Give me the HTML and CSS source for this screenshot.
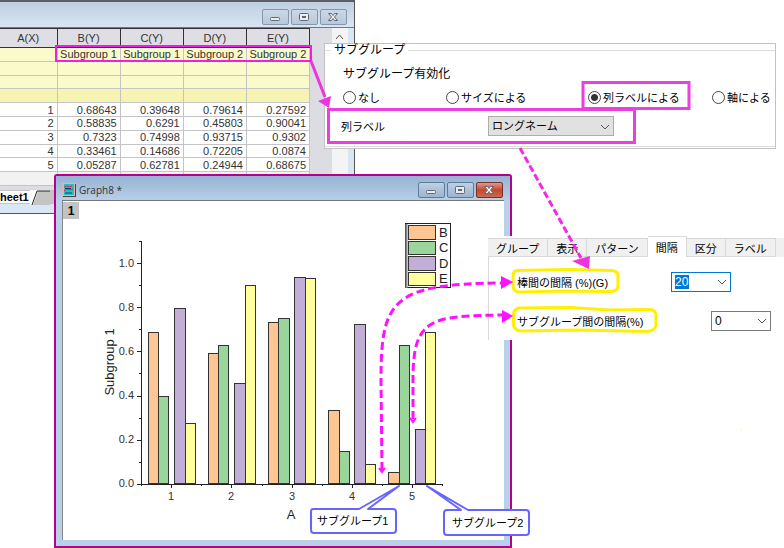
FILE: index.html
```html
<!DOCTYPE html>
<html lang="ja">
<head>
    <meta charset="UTF-8">
    <meta name="viewport" content="width=device-width, initial-scale=1.0">
    <title>サブグループ</title>
    <link rel="stylesheet" href="styles.css">
</head>
<body>
    <main class="canvas">
        <!-- Worksheet -->
        <section class="window sheet">
            <div class="titlebar">
                <div class="win-buttons">
                    <button type="button" aria-label="Minimize"><svg width="26" height="15"><rect x="8.500" y="7.500" width="9" height="3" rx="1"/></svg></button>
                    <button type="button" aria-label="Maximize"><svg width="26" height="15"><rect x="8.500" y="3.500" width="9" height="7" rx="1"/><rect x="11.500" y="6.500" width="3" height="1"/></svg></button>
                    <button type="button" aria-label="Close"><svg width="26" height="15"><path d="M8.500 3.500h3l1.500 2 1.500-2h3l-3 3.500 3 3.500h-3l-1.500-2-1.500 2h-3l3-3.500z"/></svg></button>
                </div>
            </div>
            <div class="sheet-body">
                <table class="grid">
                    <thead>
                        <tr><th>A(X)</th><th>B(Y)</th><th>C(Y)</th><th>D(Y)</th><th>E(Y)</th></tr>
                    </thead>
                    <tbody>
                        <tr class="label"><td></td><td>Subgroup 1</td><td>Subgroup 1</td><td>Subgroup 2</td><td>Subgroup 2</td></tr>
                        <tr class="label"><td></td><td></td><td></td><td></td><td></td></tr>
                        <tr class="label"><td></td><td></td><td></td><td></td><td></td></tr>
                        <tr class="label dark"><td></td><td></td><td></td><td></td><td></td></tr>
                        <tr><td>1</td><td>0.68643</td><td>0.39648</td><td>0.79614</td><td>0.27592</td></tr>
                        <tr><td>2</td><td>0.58835</td><td>0.6291</td><td>0.45803</td><td>0.90041</td></tr>
                        <tr><td>3</td><td>0.7323</td><td>0.74998</td><td>0.93715</td><td>0.9302</td></tr>
                        <tr><td>4</td><td>0.33461</td><td>0.14686</td><td>0.72205</td><td>0.0874</td></tr>
                        <tr><td>5</td><td>0.05287</td><td>0.62781</td><td>0.24944</td><td>0.68675</td></tr>
                        <tr class="rest"><td></td><td></td><td></td><td></td><td></td></tr>
                    </tbody>
                </table>
                <div class="scrollbar"><svg width="16" height="18"><path d="M4 11l3.500-4 3.500 4"/></svg></div>
            </div>
            <div class="sheet-tabs">
                <span>heet1</span>
                <svg width="20" height="15"><path class="tab-rest" d="M3 15L8 1H20V15z"/><path d="M2 15L7 1H20"/></svg>
            </div>
        </section>

        <!-- Graph -->
        <section class="window graph">
            <div class="titlebar">
                <svg class="graph-icon" width="14" height="14">
                    <rect x="1" y="1" width="13" height="13" fill="#5c3b3b"/>
                    <rect x="0" y="0" width="13" height="13" fill="#d8b8b0"/>
                    <rect x="2" y="1" width="10" height="11" fill="#25bfc4"/>
                    <path d="M2 4l3-1 2 1 3-1M2 8l3-2 3 1 3-1" stroke="#d8304a" fill="none"/>
                    <path d="M3 10h7M3 5.500h6" stroke="#173d7a" fill="none"/>
                </svg>
                <span>Graph8 *</span>
                <div class="win-buttons">
                    <button type="button" aria-label="Minimize"><svg width="26" height="15"><rect x="8.500" y="7.500" width="9" height="3" rx="1"/></svg></button>
                    <button type="button" aria-label="Maximize"><svg width="26" height="15"><rect x="8.500" y="3.500" width="9" height="7" rx="1"/><rect x="11.500" y="6.500" width="3" height="1"/></svg></button>
                    <button type="button" class="close" aria-label="Close"><svg width="26" height="15"><path d="M8.500 3.500h3l1.500 2 1.500-2h3l-3 3.500 3 3.500h-3l-1.500-2-1.500 2h-3l3-3.500z"/></svg></button>
                </div>
            </div>
            <div class="graph-body">
                <svg class="chart" viewBox="63 201 441 339">
                    <rect x="63" y="202" width="16" height="17" fill="#c3c3c3"/>
                    <text class="layer" x="71" y="215">1</text>

                    <g class="b">
                        <rect x="148.500" y="332.500" width="10" height="151"/>
                        <rect x="208.500" y="353.500" width="10" height="130"/>
                        <rect x="268.500" y="322.500" width="10" height="161"/>
                        <rect x="328.500" y="410.500" width="11" height="73"/>
                        <rect x="388.500" y="472.500" width="11" height="11"/>
                    </g>
                    <g class="c">
                        <rect x="158.500" y="396.500" width="10" height="87"/>
                        <rect x="218.500" y="345.500" width="10" height="138"/>
                        <rect x="278.500" y="318.500" width="11" height="165"/>
                        <rect x="339.500" y="451.500" width="10" height="32"/>
                        <rect x="399.500" y="345.500" width="10" height="138"/>
                    </g>
                    <g class="d">
                        <rect x="174.500" y="308.500" width="11" height="175"/>
                        <rect x="234.500" y="383.500" width="11" height="100"/>
                        <rect x="294.500" y="277.500" width="11" height="206"/>
                        <rect x="354.500" y="324.500" width="11" height="159"/>
                        <rect x="415.500" y="429.500" width="10" height="54"/>
                    </g>
                    <g class="e">
                        <rect x="185.500" y="423.500" width="10" height="60"/>
                        <rect x="245.500" y="285.500" width="10" height="198"/>
                        <rect x="305.500" y="278.500" width="10" height="205"/>
                        <rect x="365.500" y="464.500" width="10" height="19"/>
                        <rect x="425.500" y="332.500" width="10" height="151"/>
                    </g>

                    <path class="axis" d="M141.500 241V484M137 484.500H443
                        M137 440.500h5M137 396.500h5M137 351.500h5M137 307.500h5M137 263.500h5
                        M139 241.500h3M139 285.500h3M139 329.500h3M139 373.500h3M139 418.500h3M139 462.500h3
                        M171.500 484v4M231.500 484v4M292.500 484v4M352.500 484v4M412.500 484v4
                        M141.500 484v2M201.500 484v2M262.500 484v2M322.500 484v2M382.500 484v2M442.500 484v2"/>
                    <g class="tick y">
                        <text x="134" y="267">1.0</text>
                        <text x="134" y="311">0.8</text>
                        <text x="134" y="355">0.6</text>
                        <text x="134" y="399">0.4</text>
                        <text x="134" y="443">0.2</text>
                        <text x="134" y="487">0.0</text>
                    </g>
                    <g class="tick x">
                        <text x="171" y="500">1</text>
                        <text x="231" y="500">2</text>
                        <text x="292" y="500">3</text>
                        <text x="352" y="500">4</text>
                        <text x="412" y="500">5</text>
                    </g>
                    <text class="title" x="291" y="519">A</text>
                    <text class="title" transform="translate(114 362) rotate(-90)">Subgroup 1</text>

                    <rect class="legend" x="405.500" y="223.500" width="45" height="64"/>
                    <path class="legend-edge" d="M406.500 288V224"/>
                    <g class="b"><rect x="408.500" y="225.500" width="27" height="14"/></g>
                    <g class="c"><rect x="408.500" y="241.500" width="27" height="13"/></g>
                    <g class="d"><rect x="408.500" y="256.500" width="27" height="14"/></g>
                    <g class="e"><rect x="408.500" y="272.500" width="27" height="13"/></g>
                    <g class="legend-text">
                        <text x="439" y="237">B</text>
                        <text x="439" y="252">C</text>
                        <text x="439" y="268">D</text>
                        <text x="439" y="283">E</text>
                    </g>
                </svg>
            </div>
        </section>

        <!-- Subgroup settings -->
        <section class="panel">
            <fieldset>
                <legend>サブグループ</legend>
                <p class="caption">サブグループ有効化</p>
                <div class="radios">
                    <label><input type="radio" name="subgroup">なし</label>
                    <label><input type="radio" name="subgroup">サイズによる</label>
                    <label><input type="radio" name="subgroup" checked>列ラベルによる</label>
                    <label><input type="radio" name="subgroup">軸による</label>
                </div>
                <div class="label-row">
                    <label for="columnLabel">列ラベル</label>
                    <div class="select-box">
                        <select id="columnLabel"><option>ロングネーム</option></select>
                        <svg class="chevron" width="10" height="6"><path d="M1 1l4 4 4-4"/></svg>
                    </div>
                </div>
            </fieldset>
        </section>

        <!-- Spacing tab -->
        <section class="spacing">
            <div class="tabs" role="tablist">
                <button type="button" role="tab">グループ</button>
                <button type="button" role="tab">表示</button>
                <button type="button" role="tab">パターン</button>
                <button type="button" role="tab" class="active" aria-selected="true">間隔</button>
                <button type="button" role="tab">区分</button>
                <button type="button" role="tab">ラベル</button>
            </div>
            <div class="fields">
                <div class="field">
                    <label for="barGap">棒間の間隔 (%)(G)</label>
                    <div class="combo focused">
                        <input type="text" id="barGap" value="20">
                        <svg class="chevron" width="10" height="6"><path d="M1 1l4 4 4-4"/></svg>
                    </div>
                </div>
                <div class="field wide">
                    <label for="subgroupGap">サブグループ間の間隔(%)</label>
                    <div class="combo">
                        <input type="text" id="subgroupGap" value="0">
                        <svg class="chevron" width="10" height="6"><path d="M1 1l4 4 4-4"/></svg>
                    </div>
                </div>
            </div>
        </section>

        <!-- Highlights, arrows and callouts -->
        <svg class="notes" width="784" height="548">
            <g class="frame">
                <rect class="thin" x="56" y="46" width="255" height="15"/>
                <rect x="583" y="82.500" width="106" height="26"/>
                <rect x="328.500" y="109.500" width="306" height="33"/>
            </g>
            <g class="marker">
                <path d="M517 270.500L570 269.500L612 270.500Q618 271 618 276V286Q618 291 611 291.500L560 291L520 292Q513 292 513 285V276Q513 271 517 270.500z"/>
                <path d="M519 308L570 307.500L610 310L650 309.500Q656 310 656 316V325Q655 331 647 331.500L580 330L521 331Q514 330 513.500 325V314Q514 309 519 308z"/>
            </g>

            <path class="arrow" d="M311 61L325 97"/>
            <path class="head soft" d="M318 101L331 96L329 108z"/>
            <path class="arrow dash" d="M520 148L581 258"/>
            <path class="head soft" d="M572 261L590 256L589 269z"/>
            <path class="curve" d="M382 470L381 380C381 300 392 284 501 283"/>
            <path class="head" d="M501 276L513 282L501 289z"/>
            <path class="curve" d="M413 419V375C414 318 432 316 502 315"/>
            <path class="head" d="M502 310L513 316L502 323z"/>
            <path class="tip" d="M379 468l3 4 3-4M410 418l3 4 3-4"/>

            <g class="callout">
                <path d="M313 509H359L399 486L368 509H393Q396 509 396 512V530Q396 533 393 533H314Q311 533 311 530V512Q311 509 313 509z"/>
                <path d="M447 510H461L427 486L468 510H526Q529 510 529 513V532Q529 535 526 535H447Q444 535 444 532V513Q444 510 447 510z"/>
                <text x="317" y="525">サブグループ1</text>
                <text x="452" y="527">サブグループ2</text>
            </g>
            <circle cx="741" cy="430" r="1" fill="#fffbb0"/>
        </svg>
    </main>
</body>
</html>
```

FILE: styles.css
```css
* {
    box-sizing: border-box;
}
body {
    margin: 0;
    background-color: #fff;
    color: #000;
    font-family: "Liberation Sans", "Noto Sans CJK JP", sans-serif;
    font-size: 11px;
}
button, input, select {
    font: inherit;
    color: inherit;
    margin: 0;
    padding: 0;
}
.canvas {
    position: relative;
    min-height: 100vh;
    overflow: hidden;
}

/* windows */
.window {
    position: absolute;
}
.titlebar {
    display: flex;
    align-items: center;
}
.win-buttons {
    display: flex;
    gap: 2px;
    margin-left: auto;
}
.win-buttons button {
    width: 27px;
    height: 16px;
    border: 1px solid #8796ab;
    border-radius: 2px;
    background: linear-gradient(#cbd8e7, #b8c8da);
    line-height: 0;
    overflow: hidden;
}
.win-buttons svg {
    margin-left: -1px;
    fill: #e8edf3;
    stroke: #5f6875;
}
.win-buttons .close {
    border-color: #7d2f2b;
    background: linear-gradient(#dc9a8c, #c4472f 50%, #cb6a50);
}
.win-buttons .close svg {
    fill: #fff;
}

.sheet {
    top: 0;
    left: 0;
    width: 355px;
    padding-bottom: 9px;
    border-top: 2px solid #5d5d63;
    border-right: 1px solid #555;
    border-bottom: 1px solid #555;
    background-color: #d9e6f4;
}
.sheet .titlebar {
    height: 26px;
    padding: 4px 7px 0 0;
    background: linear-gradient(#bfcfdf, #d9e5f2);
    border-bottom: 1px solid #777;
}
.sheet-body {
    display: flex;
    align-items: flex-start;
    height: 162px;
    margin-right: 6px;
    background-color: #dcdce3;
}
.grid {
    width: 310px;
    height: 158px;
    table-layout: fixed;
    border-collapse: collapse;
    background-color: #fff;
    color: #333;
    line-height: 12px;
}
.grid th, .grid td {
    height: 13px;
    padding: 0 3px 0 0;
    border: 1px solid #c4c4c8;
    border-left: 0;
    text-align: right;
    white-space: nowrap;
}
.grid th {
    height: 19px;
    padding: 0;
    border-color: #333;
    background-color: #dfdee4;
    font-weight: normal;
    text-align: center;
}
.grid th:first-child {
    width: 57px;
}
.grid .label td {
    padding: 0;
    background-color: #fafacb;
    text-align: center;
}
.grid .dark td {
    background-color: #f6f4b2;
}
.grid .rest td {
    background-color: #f2f2f2;
}
.scrollbar {
    align-self: stretch;
    width: 16px;
    margin-left: auto;
    background-color: #f4f4f4;
}
.scrollbar svg, .chevron {
    fill: none;
    stroke: #555;
}
.sheet-tabs {
    display: flex;
    align-items: center;
    height: 14px;
    margin-right: 6px;
    background-color: #c4c4c4;
    font-weight: bold;
}
.sheet-tabs span {
    width: 30px;
    background-color: #fff;
}
.sheet-tabs svg {
    background-color: #fff;
    fill: none;
    stroke: #222;
}
.sheet-tabs .tab-rest {
    fill: #c4c4c4;
    stroke: none;
}

.graph {
    top: 174px;
    left: 54px;
    width: 458px;
    padding: 0 6px 6px;
    border: 2px solid #b5008c;
    border-radius: 3px 3px 0 0;
    background-color: #b8d0e8;
}
.graph .titlebar {
    height: 24px;
    margin: 0 -6px;
    padding: 4px 7px 0 6px;
    gap: 3px;
    background: linear-gradient(#97b3d2, #b7cfe8);
    color: #333;
    font-family: "Open Sans", sans-serif;
    font-size: 10px;
}
.graph .win-buttons button {
    border-color: #61799a;
    background: linear-gradient(#bdd0e5, #9bb4d0);
}
.graph .win-buttons .close {
    border-color: #7d2f2b;
    background: linear-gradient(#dc9a8c, #c4472f 50%, #cb6a50);
}
.graph-body {
    border-top: 1px solid #777;
    border-left: 1px solid #888;
    background-color: #fff;
}

/* chart */
.chart {
    display: block;
    width: 100%;
}
.chart .b rect, .chart .c rect, .chart .d rect, .chart .e rect {
    stroke: #333;
}
.b {
    fill: #fdc692;
}
.c {
    fill: #9ad69c;
}
.d {
    fill: #c1afd7;
}
.e {
    fill: #ffff9e;
}
.axis {
    fill: none;
    stroke: #222;
}
.tick {
    fill: #333;
    font-size: 11px;
}
.y {
    text-anchor: end;
}
.x, .title, .layer {
    text-anchor: middle;
}
.title {
    fill: #222;
    font-size: 13px;
}
.layer {
    font-size: 12px;
    font-weight: bold;
}
.legend {
    fill: #fff;
    stroke: #222;
}
.legend-edge {
    stroke: #888;
    stroke-width: 2px;
}
.legend-text {
    fill: #222;
    font-size: 13px;
}

/* subgroup panel */
.panel {
    position: absolute;
    top: 43px;
    left: 324px;
    width: 452px;
    height: 106px;
    border: 1px solid #c3c3c3;
    background-color: #fff;
}
.panel fieldset {
    height: 103px;
    margin: 0;
    padding: 0;
    border: 1px solid #dcdcdc;
    border-width: 1px 0;
}
.panel legend {
    margin-left: 6px;
    padding: 0 3px;
    font-size: 12px;
    line-height: 12px;
}
.caption {
    margin: 10px 0 0 18px;
    font-size: 12px;
    line-height: 16px;
}
.radios {
    display: grid;
    grid-template-columns: 103px 142px 124px auto;
    margin: 7px 0 0 18px;
}
.radios label {
    display: flex;
    align-items: center;
    gap: 2px;
    height: 16px;
    white-space: nowrap;
}
.radios input {
    appearance: none;
    width: 13px;
    height: 13px;
    border: 1px solid #444;
    border-radius: 50%;
    background-color: #fff;
}
.radios input:checked {
    background: radial-gradient(#333 0 3px, #fff 4px);
}
.label-row {
    display: flex;
    align-items: center;
    margin: 11px 0 0 16px;
}
.label-row label {
    width: 147px;
}
.select-box {
    position: relative;
}
.select-box select {
    appearance: none;
    display: block;
    width: 126px;
    height: 20px;
    padding-left: 3px;
    border: 1px solid #adadad;
    border-radius: 0;
    background-color: #e1e1e1;
}
.select-box .chevron {
    position: absolute;
    top: 8px;
    right: 4px;
}

/* spacing panel */
.spacing {
    position: absolute;
    top: 236px;
    left: 488px;
    right: 0;
    background-color: #fff;
}
.tabs {
    display: flex;
    align-items: flex-end;
    height: 21px;
    background: linear-gradient(#fff 2px, #f0f0f0 2px);
}
.tabs button {
    height: 19px;
    padding: 0 8px;
    border: 1px solid #d9d9d9;
    border-left: 0;
    background-color: #f0f0f0;
}
.tabs .active {
    height: 21px;
    border-bottom: 0;
    background-color: #fff;
}
.fields {
    display: flex;
    flex-direction: column;
    gap: 19px;
    padding: 15px 0 9px 28px;
    border-left: 1px solid #d9d9d9;
}
.field {
    display: flex;
    align-items: center;
}
.field label {
    width: 154px;
    white-space: nowrap;
}
.wide label {
    width: 194px;
}
.combo {
    display: flex;
    align-items: center;
    justify-content: space-between;
    width: 60px;
    height: 20px;
    padding: 0 3px;
    border: 1px solid #7a7a7a;
    font-size: 12px;
}
.combo input {
    width: 14px;
    height: 14px;
    border: 0;
    outline: 0;
    background-color: #fff;
}
.focused {
    border-color: #0078d7;
}
.focused input {
    background-color: #0078d7;
    color: #fff;
}

/* annotations */
.notes {
    position: absolute;
    top: 0;
    left: 0;
    fill: none;
    pointer-events: none;
}
.frame {
    stroke: #ec3fe0;
    stroke-width: 3px;
}
.frame .thin {
    stroke: #f01fe0;
    stroke-width: 2px;
}
.marker {
    stroke: #fff000;
    stroke-width: 3px;
}
.arrow {
    stroke: #ee35dc;
    stroke-width: 3px;
}
.dash {
    stroke: #f528e8;
    stroke-dasharray: 7 3;
}
.curve {
    stroke: #ff10ff;
    stroke-width: 3px;
    stroke-dasharray: 8 4;
}
.head {
    fill: #ff10ff;
}
.soft {
    fill: #ee35dc;
}
.tip {
    stroke: #ff10ff;
    stroke-width: 2px;
}
.callout path {
    fill: #fff;
    stroke: #6666ff;
    stroke-width: 2px;
    stroke-linejoin: round;
}
.callout text {
    fill: #000;
    font-size: 11px;
}
```
